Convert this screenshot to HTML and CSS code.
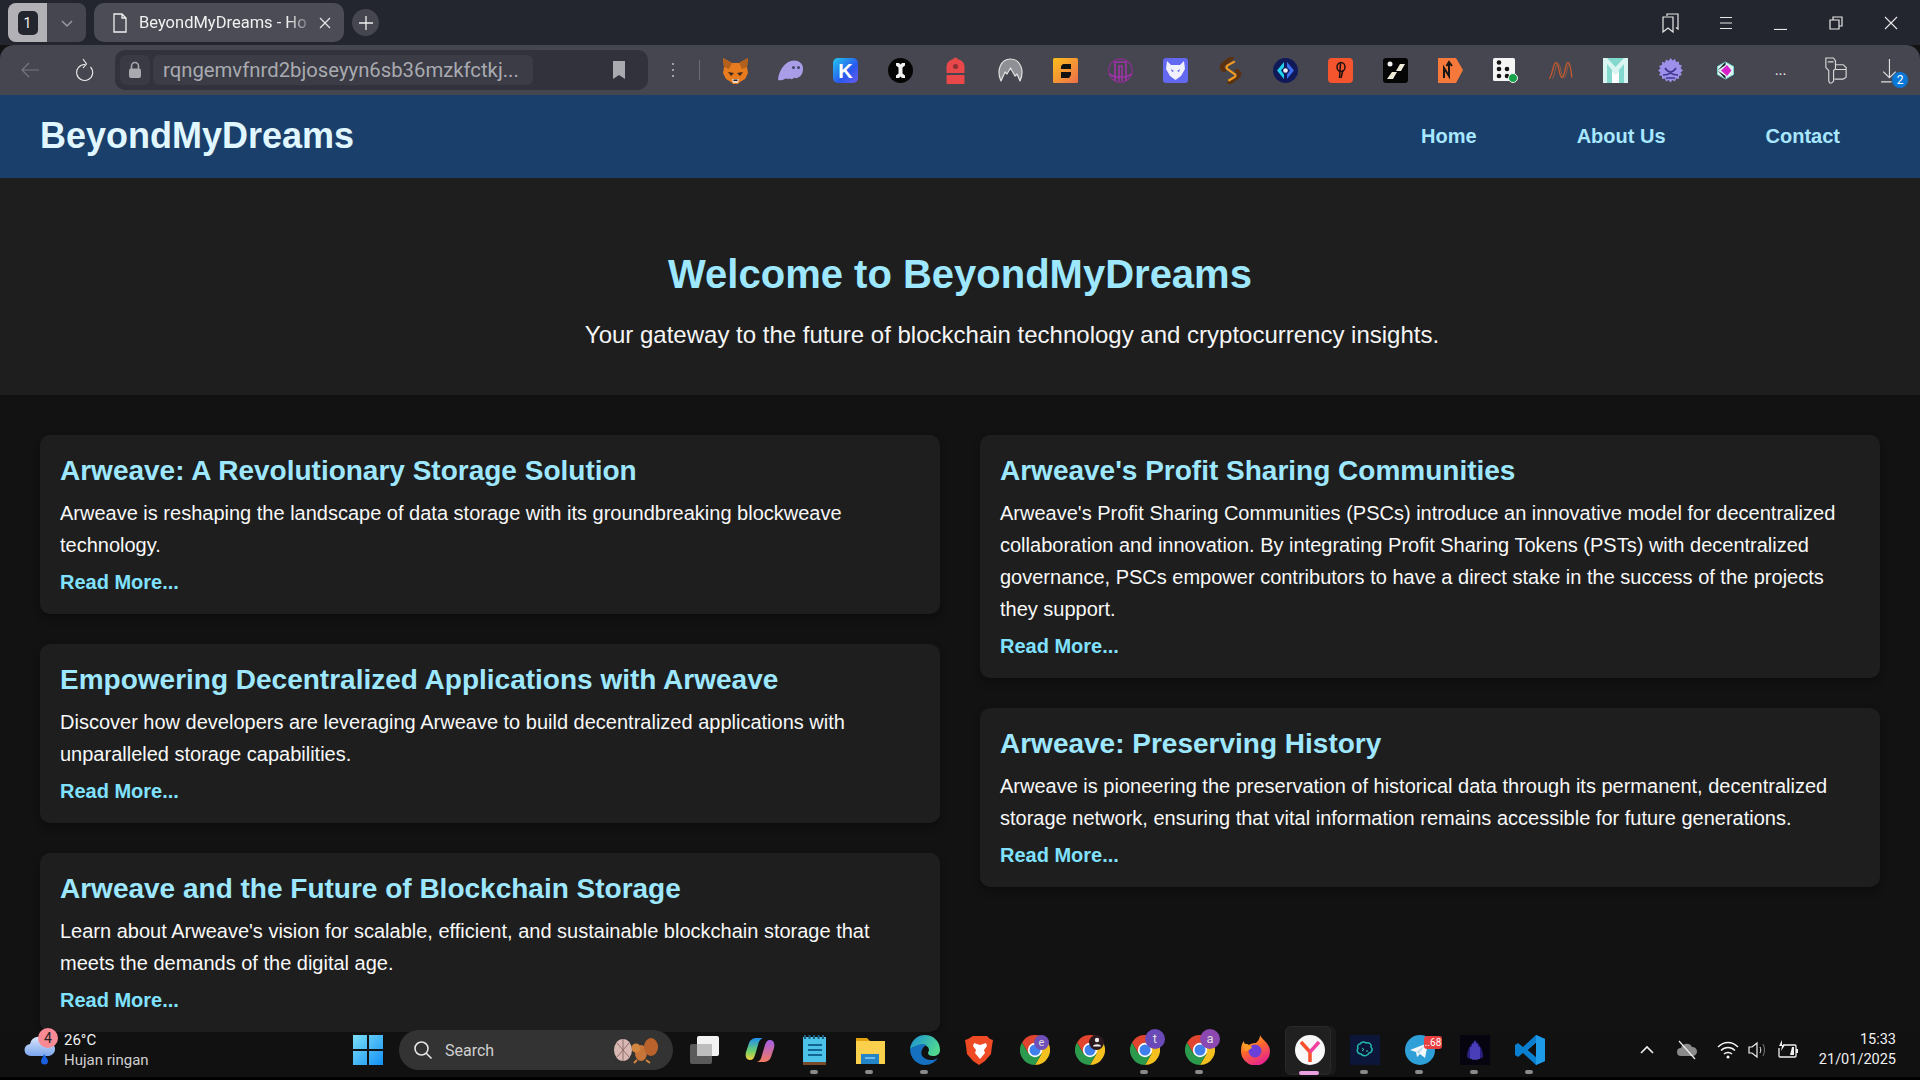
FILE: index.html
```html
<!DOCTYPE html>
<html lang="en">
<head>
    <meta charset="UTF-8">
    <meta name="viewport" content="width=device-width, initial-scale=1.0">
    <title>BeyondMyDreams - Home</title>
    <link rel="stylesheet" href="styles.css">
</head>
<body>
    <!-- shared icons -->
    <svg class="defs">
        <symbol id="chrome" viewBox="0 0 30 30">
            <path d="M15 7.500H28A15 15 0 0 0 2 7.500L8.500 18.750z" fill="#e2452f"/>
            <path d="M28 7.500A15 15 0 0 1 15 30L21.500 18.750 15 7.500z" fill="#f4c020"/>
            <path d="M15 30A15 15 0 0 1 2 7.500L8.500 18.750H21.500z" fill="#2c9a4c"/>
            <circle cx="15" cy="15" r="7.200" fill="#fff"/>
            <circle cx="15" cy="15" r="5.500" fill="#3f80ec"/>
        </symbol>
    </svg>

    <!-- browser tab strip -->
    <div class="tabstrip">
        <div class="workspace">
            <span class="ws-home"><span class="ws-num">1</span></span>
            <span class="ws-more">
                <svg width="14" height="14" viewBox="0 0 14 14"><path d="M2 5l5 5 5-5" fill="none" stroke="#9a9ba2" stroke-width="1.500"/></svg>
            </span>
        </div>
        <div class="tab">
            <svg width="16" height="20" viewBox="0 0 16 20"><path d="M2 1h8l4 4v14H2zM10 1v4h4" fill="none" stroke="#f0f0f0" stroke-width="1.300"/></svg>
            <span class="tab-title">BeyondMyDreams - Ho</span>
            <svg width="14" height="14" viewBox="0 0 14 14"><path d="M2 2l10 10M12 2L2 12" stroke="#e8e8e8" stroke-width="1.200"/></svg>
        </div>
        <span class="new-tab">
            <svg width="14" height="14" viewBox="0 0 14 14"><path d="M7 0v14M0 7h14" stroke="#f0f0f0" stroke-width="1.300"/></svg>
        </span>
        <div class="window-btns">
            <svg width="18" height="22" viewBox="0 0 18 22"><path d="M5 4V2h11v15l-2-1.500M1 5h10v15l-5-4-5 4z" fill="none" stroke="#e8e8e8" stroke-width="1.200"/></svg>
            <svg width="14" height="14" viewBox="0 0 14 14"><path d="M1 1.500h12M1 7h12M1 12.500h12" stroke="#e8e8e8" stroke-width="1.100"/></svg>
            <svg width="14" height="14" viewBox="0 0 14 14"><path d="M0 13.500h13" stroke="#e8e8e8" stroke-width="1.200"/></svg>
            <svg width="14" height="14" viewBox="0 0 14 14"><path d="M1 4h9v9H1zM4 4V1h9v9h-3" fill="none" stroke="#e8e8e8" stroke-width="1.200"/></svg>
            <svg width="14" height="14" viewBox="0 0 14 14"><path d="M1 1l12 12M13 1L1 13" stroke="#e8e8e8" stroke-width="1.100"/></svg>
        </div>
    </div>

    <!-- browser toolbar -->
    <div class="toolbar">
        <span class="nav-btn">
            <svg width="20" height="18" viewBox="0 0 20 18"><path d="M19 9H2M9 2L2 9l7 7" fill="none" stroke="#77787f" stroke-width="1.200"/></svg>
        </span>
        <span class="nav-btn">
            <svg width="20" height="24" viewBox="0 0 20 24"><path d="M15.500 9a8 8 0 1 1-5.500-2.500M8 1l3.500 5L8 10" fill="none" stroke="#f0f0f0" stroke-width="1.100"/></svg>
        </span>
        <div class="addressbar">
            <span class="lock">
                <svg width="14" height="18" viewBox="0 0 14 18"><path d="M3.500 8V5a3.500 3.500 0 0 1 7 0v3" fill="none" stroke="#a9aab0" stroke-width="1.600"/><rect x="1" y="7.500" width="12" height="9.500" rx="2" fill="#a9aab0"/></svg>
            </span>
            <span class="url">rqngemvfnrd2bjoseyyn6sb36mzkfctkj...</span>
            <svg class="bookmark" width="14" height="18" viewBox="0 0 14 18"><path d="M1 0h12v18l-6-4-6 4z" fill="#a9aab0"/></svg>
        </div>
        <span class="kebab"><i></i><i></i><i></i></span>
        <span class="toolbar-sep"></span>
        <div class="extensions">
            <span class="ext"><svg viewBox="0 0 25 25"><path d="M0 0l9 5h7l9-5-1 9 1 6-3 6-5 3-2 2h-5l-2-2-5-3-3-6 1-6z" fill="#e87b1e"/><path d="M0 0l9 5-3 6-5-2zM25 0l-9 5 3 6 5-2z" fill="#b3601c"/><path d="M5 14l6 1-3 3zM20 14l-6 1 3 3z" fill="#3a2a1c"/><path d="M9 21h7l-1 4h-5z" fill="#e4d8cc"/><path d="M10.500 21.500h4v1.500h-4z" fill="#222"/></svg></span>
            <span class="ext"><svg viewBox="0 0 25 20"><path d="M0 19C1 10 7 0 16 0c6 0 9 4 9 8 0 5-2 8-5 9-1 1-3 1-4 0-1 2-3 2-4 1-2 1-3 0-4 0-2 1-7 3-8 1z" fill="#a99de8"/><circle cx="15.500" cy="7" r="1.500" fill="#44446a"/><circle cx="20.500" cy="7" r="1.500" fill="#44446a"/></svg></span>
            <span class="ext"><svg viewBox="0 0 25 25"><defs><linearGradient id="kgrad" x1="0" y1="0" x2="1" y2="1"><stop offset="0" stop-color="#22c8f0"/><stop offset="0.600" stop-color="#2a58ee"/><stop offset="1" stop-color="#6a5cf0"/></linearGradient></defs><rect width="25" height="25" rx="5" fill="url(#kgrad)"/><text x="12.500" y="20" class="ext-letter">K</text></svg></span>
            <span class="ext"><svg viewBox="0 0 25 25"><circle cx="12.500" cy="12.500" r="12.500" fill="#050505"/><path d="M8 5h3l1.500 1.500L14 5h3v2.500l-2.500 2v6l2.500 2V20h-3l-1.500-1.500L11 20H8v-2.500l2.500-2v-6L8 7.500z" fill="#f2f2f2"/></svg></span>
            <span class="ext"><svg viewBox="0 0 18 27"><path d="M6 2.500C7 0 11 0 12 2.500z" fill="#e8484a"/><path d="M0 9a9 7 0 0 1 18 0v7H0z" fill="#e8484a"/><circle cx="9" cy="9.500" r="2.500" fill="#8a3036"/><rect y="18" width="18" height="9" rx="1" fill="#e8484a"/></svg></span>
            <span class="ext"><svg viewBox="0 0 25 25"><path d="M3 23C-2 12 3 1 12.500 1S27 12 22 23l-3-7-2 2-4.500-8L9 16l-2-2z" fill="#8f9095" stroke="#e2e2e2" stroke-width="1.200" stroke-linejoin="round"/></svg></span>
            <span class="ext"><svg viewBox="0 0 25 25"><defs><linearGradient id="ograd" x1="0" y1="0" x2="1" y2="1"><stop offset="0" stop-color="#fbbf1c"/><stop offset="1" stop-color="#ee6e4a"/></linearGradient></defs><rect width="25" height="25" rx="1.500" fill="url(#ograd)"/><path d="M10 6h8v5H8V8zM8 14h10v3l-2 3H8z" fill="#111"/></svg></span>
            <span class="ext"><svg viewBox="0 0 25 25"><circle cx="12.500" cy="12.500" r="11.700" fill="none" stroke="#8b2f92" stroke-width="1.200"/><path d="M7 23V4h11v19M11 23V8h3v15M1 16l6 3h11l6-3" fill="none" stroke="#a033a8" stroke-width="1.600"/></svg></span>
            <span class="ext"><svg viewBox="0 0 25 25"><rect width="25" height="25" rx="3" fill="#6368f0"/><path d="M4 3l4 4h9l4-4 1 8-4 7-5.500 4L7 18l-4-7z" fill="#f0f0ff"/><path d="M8 11l3 2-2 1zM17 11l-3 2 2 1z" fill="#6368f0"/></svg></span>
            <span class="ext"><svg viewBox="0 0 20 25"><path d="M11 1L3 7c-2 2-1 4 1 5M9 24l8-6c2-2 1-4-1-5" fill="none" stroke="#5a3212" stroke-width="4" stroke-linecap="round"/><path d="M14 4L7 8c-1 1-1 2 0 3l7 5c1 1 1 2-1 3l-5 3" fill="none" stroke="#f59a1c" stroke-width="2"/></svg></span>
            <span class="ext"><svg viewBox="0 0 25 25"><circle cx="12.500" cy="12.500" r="12.500" fill="#101a58"/><path d="M11 4l-7 8.500L11 21v-4.500L8 12.500 11 9z" fill="#22d3ee"/><path d="M14 4l7 8.500-7 8.500v-4.500l3-4-3-3.500z" fill="#3b6ff0"/><circle cx="12.500" cy="12.500" r="2.300" fill="#f4f4f4"/></svg></span>
            <span class="ext"><svg viewBox="0 0 25 25"><rect width="25" height="25" rx="4" fill="#f4552e"/><ellipse cx="13" cy="9" rx="4" ry="4.500" fill="none" stroke="#201010" stroke-width="1.500"/><path d="M12.500 5l-1 15M15 12l-2 8" stroke="#201010" stroke-width="1.500"/></svg></span>
            <span class="ext"><svg viewBox="0 0 25 25"><rect width="25" height="25" rx="3" fill="#050505"/><circle cx="7" cy="6" r="2.500" fill="#f4f4f4"/><path d="M17 6h5l-4 7h-5zM9 14h5l-4 7H4z" fill="#f0ead8"/></svg></span>
            <span class="ext"><svg viewBox="0 0 25 25"><path d="M0 0h18l7 12-7 13H0z" fill="#f4793b"/><path d="M6 20V10l5 8V6M8.500 8L11 4l3 4" fill="none" stroke="#161616" stroke-width="2"/></svg></span>
            <span class="ext"><svg viewBox="0 0 25 25"><rect width="22" height="23" rx="1.500" fill="#f5f5f5"/><circle cx="6" cy="4.500" r="2.300" fill="#151515"/><circle cx="6" cy="11" r="2.300" fill="#151515"/><circle cx="14" cy="11" r="2.300" fill="#151515"/><circle cx="6" cy="18" r="2.300" fill="#151515"/><circle cx="14" cy="18" r="2.300" fill="#151515"/><circle cx="20" cy="20" r="4.500" fill="#16a34a" stroke="#f5f5f5"/></svg></span>
            <span class="ext"><svg viewBox="0 0 25 18"><path d="M1 17C4 17 5 1 8 1s3 15 6 15 3-15 6-15 3 12 4 15" fill="none" stroke="#c4592e" stroke-width="1.300"/><path d="M4 17C7 17 7 2 10 2s3 14 6 14 3-13 5-13" fill="none" stroke="#8e5a44" stroke-width="1.100"/></svg></span>
            <span class="ext"><svg viewBox="0 0 25 25"><rect width="25" height="25" fill="#84d9cf"/><path d="M0 0h4l8.500 9L21 0h4v25h-4V6l-5 6v13H9V12L4 6v19H0z" fill="#fff" opacity="0.700"/><path d="M9 25V14l3.500 3 3.500-3v11z" fill="#fff"/></svg></span>
            <span class="ext"><svg viewBox="0 0 25 25"><path d="M12.500 0l2 2.500 2.500-1.500 1 3 3-.5v3l3 1-1.500 2.500L25 12.500l-2.500 2 1.500 2.500-3 1v3l-3-.5-1 3-2.500-1.500-2 2.500-2-2.500L8 23.500l-1-3-3 .5v-3l-3-1 1.500-2.500L0 12.500l2.500-2L1 8l3-1V4l3 .5 1-3 2.500 1.500z" fill="#9d90ea"/><path d="M7 10c2 3 3 4 5.500 4S16 13 18 10M5 17c3 0 5 0 7.500-2 2.500 2 4.500 2 7.500 2M8 20h9" fill="none" stroke="#3f3690" stroke-width="1.600"/></svg></span>
            <span class="ext"><svg viewBox="0 0 25 25"><path d="M12.500 4l8 4.500v8l-8 4.500-8-4.500v-8z" fill="#dff6f4" stroke="#7ad7d2"/><path d="M4.500 12.500L12.500 4v3z" fill="#101820"/><path d="M4.500 12.500l8 8.500v-3z" fill="#101820"/><path d="M14 7l4.500 5.500L14 18l-6-5.500z" fill="#d820c8"/></svg></span>
            <span class="ext ext-text">...</span>
            <span class="ext"><svg viewBox="0 0 24 28"><path d="M2 1h8l2 3v8l-2 2v11l-2 2H6l-1-2V14L2 11zM4 5h6M12 8h8l3 3v10l-3 2h-9M12 13h11" fill="none" stroke="#d8d8d8" stroke-width="1.200"/></svg></span>
            <span class="ext"><svg viewBox="0 0 24 26"><path d="M11 2v18M5 14l6 6 6-6M3 24h10" fill="none" stroke="#e0e0e0" stroke-width="1.100"/></svg><span class="dl-badge">2</span></span>
        </div>
    </div>

    <!-- the page itself -->
    <div class="viewport">
        <header class="navbar">
            <div class="logo">BeyondMyDreams</div>
            <nav class="nav-links">
                <a href="#">Home</a>
                <a href="#">About Us</a>
                <a href="#">Contact</a>
            </nav>
        </header>

        <section class="hero">
            <h1>Welcome to BeyondMyDreams</h1>
            <p>Your gateway to the future of blockchain technology and cryptocurrency insights.</p>
        </section>

        <main class="posts">
            <div class="post-col">
                <article class="post">
                    <h2>Arweave: A Revolutionary Storage Solution</h2>
                    <p>Arweave is reshaping the landscape of data storage with its groundbreaking blockweave technology.</p>
                    <a href="#">Read More...</a>
                </article>
                <article class="post">
                    <h2>Empowering Decentralized Applications with Arweave</h2>
                    <p>Discover how developers are leveraging Arweave to build decentralized applications with unparalleled storage capabilities.</p>
                    <a href="#">Read More...</a>
                </article>
                <article class="post">
                    <h2>Arweave and the Future of Blockchain Storage</h2>
                    <p>Learn about Arweave's vision for scalable, efficient, and sustainable blockchain storage that meets the demands of the digital age.</p>
                    <a href="#">Read More...</a>
                </article>
            </div>
            <div class="post-col">
                <article class="post">
                    <h2>Arweave's Profit Sharing Communities</h2>
                    <p>Arweave's Profit Sharing Communities (PSCs) introduce an innovative model for decentralized collaboration and innovation. By integrating Profit Sharing Tokens (PSTs) with decentralized governance, PSCs empower contributors to have a direct stake in the success of the projects they support.</p>
                    <a href="#">Read More...</a>
                </article>
                <article class="post">
                    <h2>Arweave: Preserving History</h2>
                    <p>Arweave is pioneering the preservation of historical data through its permanent, decentralized storage network, ensuring that vital information remains accessible for future generations.</p>
                    <a href="#">Read More...</a>
                </article>
            </div>
        </main>
    </div>

    <!-- windows taskbar -->
    <footer class="taskbar">
        <div class="weather">
            <span class="weather-icon">
                <svg width="32" height="32" viewBox="0 0 32 32"><defs><linearGradient id="cloud" x1="0" y1="0" x2="0" y2="1"><stop offset="0" stop-color="#d8e6fb"/><stop offset="1" stop-color="#7ba6ee"/></linearGradient></defs><path d="M7 22a6 6 0 0 1-1-12 9 9 0 0 1 17-2 7 7 0 0 1 2 14z" fill="url(#cloud)"/><path d="M20 20c2 3 4 5 4 7a3.500 3.500 0 0 1-7 0c0-2 2-4 3-7z" fill="#1a5fe0"/></svg>
                <span class="weather-badge">4</span>
            </span>
            <div class="weather-text">
                <span>26°C</span>
                <span class="weather-desc">Hujan ringan</span>
            </div>
        </div>
        <span class="start">
            <svg width="30" height="30" viewBox="0 0 30 30"><defs><linearGradient id="win" x1="0" y1="0" x2="1" y2="1"><stop offset="0" stop-color="#7ce0f8"/><stop offset="1" stop-color="#1390f5"/></linearGradient></defs><path d="M0 0h14v14H0zM16 0h14v14H16zM0 16h14v14H0zM16 16h14v14H16z" fill="url(#win)"/></svg>
        </span>
        <div class="searchbox">
            <svg width="20" height="20" viewBox="0 0 20 20"><circle cx="8.500" cy="8.500" r="6.500" fill="none" stroke="#e6e6e6" stroke-width="1.600"/><path d="M13 13l5.500 5.500" stroke="#e6e6e6" stroke-width="1.600"/></svg>
            <span class="search-label">Search</span>
            <svg class="search-art" width="50" height="30" viewBox="0 0 50 30"><ellipse cx="10" cy="15" rx="9" ry="11" fill="#d9b8b4"/><path d="M4 8l12 14M10 4v22M16 8L4 22" stroke="#8e6f6c"/><ellipse cx="28" cy="18" rx="6" ry="8" fill="#c8753a"/><circle cx="23" cy="13" r="4.500" fill="#d4853f"/><ellipse cx="38" cy="12" rx="7" ry="9" fill="#b9622c"/><path d="M24 25l-3 3M33 25l4 3" stroke="#d4853f" stroke-width="2"/></svg>
        </div>
        <div class="apps">
            <span class="app"><svg viewBox="0 0 30 30"><rect x="7" y="1" width="22" height="20" rx="2" fill="#f2f2f2"/><rect x="0" y="9" width="22" height="20" rx="2" fill="#5a5a5a"/><rect x="7" y="9" width="15" height="12" fill="#bdbdbd"/></svg></span>
            <span class="app"><svg viewBox="0 0 30 30"><defs><linearGradient id="cop1" x1="0" y1="0" x2="0" y2="1"><stop offset="0" stop-color="#1c8ef0"/><stop offset="0.600" stop-color="#6fd06a"/><stop offset="1" stop-color="#f4d03c"/></linearGradient><linearGradient id="cop2" x1="0" y1="0" x2="0" y2="1"><stop offset="0" stop-color="#a45ee6"/><stop offset="1" stop-color="#f27a5e"/></linearGradient></defs><path d="M12 3h6c-3 1-4 3-5 7l-3 10c-1 3-2 5-5 5-4 0-5-4-4-8l3-9c1-3 4-5 8-5z" fill="url(#cop1)"/><path d="M18 27h-6c3-1 4-3 5-7l3-10c1-3 2-5 5-5 4 0 5 4 4 8l-3 9c-1 3-4 5-8 5z" fill="url(#cop2)"/></svg></span>
            <span class="app app-on"><svg viewBox="0 0 24 30"><rect y="2" width="23" height="27" fill="#4cc2e8"/><rect y="27" width="23" height="3" fill="#7a4a2a"/><path d="M2 0v4M6.500 0v4M11 0v4M15.500 0v4M20 0v4" stroke="#1a5f80" stroke-width="2"/><path d="M5 10h14M5 15h14M5 20h14" stroke="#106690" stroke-width="2"/></svg></span>
            <span class="app app-on"><svg viewBox="0 0 30 30"><path d="M1 3h11l3 3h-14z" fill="#e0a10c"/><rect x="1" y="6" width="29" height="23" fill="#fbd04c"/><path d="M6 19h18v10H6z" fill="#2384c8"/><path d="M10 23h10" stroke="#8ad0f0" stroke-width="1.500"/></svg></span>
            <span class="app app-on"><svg viewBox="0 0 30 30"><defs><linearGradient id="edge" x1="0" y1="0" x2="1" y2="0.500"><stop offset="0" stop-color="#1a8fd8"/><stop offset="1" stop-color="#50d890"/></linearGradient></defs><path d="M0 14C1 6 7 0 15 0c8 0 15 6 15 15 0 4-3 6-7 6-3 0-5-1-5-3 0-1 1-2 1-3 0-3-3-5-6-5-7 0-13 4-13 4z" fill="url(#edge)"/><path d="M0 14c0 9 7 16 15 16 6 0 10-3 13-7-3 2-8 3-12 1-5-2-6-7-3-11 1-2 3-3 4-3-4-2-9-1-13 2-2 1-4 1-4 2z" fill="#1570c0"/></svg></span>
            <span class="app"><svg viewBox="0 0 26 30"><path d="M6 1h14l3 3 3 1-1 6-1 8-6 7-6 4-6-4-6-7-1-8-1-6 3-1z" fill="#ee4a24"/><path d="M7 8l6 2 6-2 1 3-3 4 1 3-5 6-5-6 1-3-3-4z" fill="#fff"/></svg></span>
            <span class="app"><svg viewBox="0 0 30 30"><use href="#chrome"/></svg><span class="app-badge badge-purple">e</span></span>
            <span class="app"><svg viewBox="0 0 30 30"><use href="#chrome"/></svg><span class="app-badge badge-dark"><svg width="10" height="10" viewBox="0 0 10 10"><circle cx="5" cy="3" r="2.200" fill="#eee"/><path d="M1 9.500c0-3 8-3 8 0z" fill="#eee"/></svg></span></span>
            <span class="app app-on"><svg viewBox="0 0 30 30"><use href="#chrome"/></svg><span class="app-badge badge-large badge-violet">t</span></span>
            <span class="app app-on"><svg viewBox="0 0 30 30"><use href="#chrome"/></svg><span class="app-badge badge-large badge-plum">a</span></span>
            <span class="app"><svg viewBox="0 0 30 30"><defs><linearGradient id="ff" x1="0" y1="0" x2="0.500" y2="1"><stop offset="0" stop-color="#ffd23c"/><stop offset="0.500" stop-color="#ff6a28"/><stop offset="1" stop-color="#e8278a"/></linearGradient></defs><path d="M20 0c1 4 10 8 10 16a14.500 14.500 0 0 1-29 0C1 11 2 8 4 6c0 3 1 4 4 5 3-3 6-3 8-3 3-3 4-5 4-8z" fill="url(#ff)"/><circle cx="15" cy="16" r="6.500" fill="#6a40d8"/><path d="M2 9c5-1 9 1 10 4-2 1-5 4-7 3z" fill="#ff9a28"/></svg></span>
            <span class="app app-current"><svg viewBox="0 0 30 30"><circle cx="15" cy="15" r="15" fill="#f8f8f8"/><path d="M15 17L6 7M15 17v10" fill="none" stroke="#f9502c" stroke-width="3.500"/><path d="M15 17l9-10" fill="none" stroke="#f040a0" stroke-width="3.500"/></svg></span>
            <span class="app app-on"><svg viewBox="0 0 30 30"><rect width="30" height="30" fill="#0c1638"/><path d="M10 9c2-3 5-2 6-1 3-1 6 1 5 4 2 2 1 6-2 6-1 3-6 4-8 1-3 0-5-3-3-6-1-2 0-4 2-4z" fill="none" stroke="#22b8b0" stroke-width="1.500"/><path d="M12 13l2 1.500-2 1.500M16 16h2" fill="none" stroke="#30d0a8"/></svg></span>
            <span class="app app-on"><svg viewBox="0 0 30 30"><circle cx="15" cy="15" r="15" fill="#2f9fd8"/><path d="M5 15L23 8l-3 15-5-4-3 3-1-5z" fill="#f4f9fc"/><path d="M11 17l9-7-6 9z" fill="#c2dcec"/></svg><span class="app-count">..68</span></span>
            <span class="app app-on"><svg viewBox="0 0 30 30"><rect width="30" height="30" fill="#05040f"/><path d="M15 5c5 5 8 10 8 17-3 3-13 3-16 0 0-7 3-12 8-17z" fill="#2a2080"/><path d="M11 12v12M13 9v16M15 7v18M17 9v16M19 12v12" stroke="#6a5cf0"/></svg></span>
            <span class="app app-on"><svg viewBox="0 0 30 30"><path d="M21 0l9 4v22l-9 4L8 18l-5 4-3-2V10l3-2 5 4zM21 8l-8 7 8 7z" fill="#0a7fd0"/><path d="M21 0l9 4v22l-9 4z" fill="#1e9be8"/><path d="M21 8l-8 7 8 7z" fill="#111"/></svg></span>
        </div>
        <div class="tray">
            <svg width="14" height="10" viewBox="0 0 14 10"><path d="M1 8l6-6 6 6" fill="none" stroke="#f0f0f0" stroke-width="1.600"/></svg>
            <svg class="tray-cloud" width="22" height="20" viewBox="0 0 22 20"><path d="M5 16a4 4 0 0 1 0-8 6 6 0 0 1 11-1 4.500 4.500 0 0 1 1 9z" fill="#8a8a8a"/><path d="M3 1l16 18" stroke="#f0f0f0" stroke-width="1.200"/></svg>
            <svg width="22" height="18" viewBox="0 0 22 18"><path d="M1 6c6-6 14-6 20 0M4 9.500c4-4 10-4 14 0M7 13c2-2 6-2 8 0" fill="none" stroke="#f4f4f4" stroke-width="1.400"/><circle cx="11" cy="16" r="1.500" fill="#f4f4f4"/></svg>
            <svg class="tray-tight" width="20" height="18" viewBox="0 0 20 18"><path d="M1 6h3l5-4v14l-5-4H1z" fill="none" stroke="#f0f0f0" stroke-width="1.200"/><path d="M12 6c1 2 1 4 0 6" fill="none" stroke="#f0f0f0"/><path d="M15 3c2 4 2 8 0 12" fill="none" stroke="#777"/></svg>
            <svg class="tray-tight" width="22" height="20" viewBox="0 0 22 20"><path d="M6 5h12a1 1 0 0 1 1 1v10a1 1 0 0 1-1 1H3a1 1 0 0 1-1-1V8" fill="none" stroke="#f0f0f0" stroke-width="1.300"/><path d="M5 15h8l2-8h2v8h-3z" fill="#f0f0f0"/><path d="M5 0L2 6h3l-1 5 4-6H5z" fill="#f0f0f0"/><path d="M19 9h2v4h-2z" fill="#f0f0f0"/></svg>
        </div>
        <div class="clock">
            <span>15:33</span>
            <span>21/01/2025</span>
        </div>
    </footer>
</body>
</html>
```

FILE: styles.css
```css
* {
    box-sizing: border-box;
}
html, body {
    margin: 0;
    padding: 0;
    height: 1080px;
    overflow: hidden;
}
body {
    display: flex;
    flex-direction: column;
    font-family: "Liberation Sans", Arial, sans-serif;
    background: #121212;
    color: #e0e0e0;
}
.defs {
    position: absolute;
    width: 0;
    height: 0;
}

/* tab strip */
.tabstrip {
    flex: none;
    height: 45px;
    display: flex;
    align-items: center;
    padding: 0 0 0 8px;
    background: #24262f;
    font-family: Roboto, sans-serif;
    color: #f0f0f0;
}
.workspace {
    display: flex;
    width: 78px;
    height: 39px;
    border-radius: 8px;
    overflow: hidden;
    background: #45464f;
}
.ws-home {
    width: 39px;
    display: flex;
    align-items: center;
    justify-content: center;
    background: #b2b2b6;
}
.ws-num {
    width: 20px;
    height: 24px;
    display: flex;
    align-items: center;
    justify-content: center;
    background: #24262f;
    border-radius: 5px;
    font-size: 14px;
}
.ws-more {
    flex: 1;
    display: flex;
    align-items: center;
    justify-content: center;
}
.tab {
    width: 250px;
    height: 39px;
    margin-left: 8px;
    padding: 0 12px 0 18px;
    display: flex;
    align-items: center;
    gap: 11px;
    border-radius: 10px;
    background: #4b4c55;
}
.tab-title {
    flex: 1;
    overflow: hidden;
    white-space: nowrap;
    font-size: 16.500px;
    -webkit-mask-image: linear-gradient(to right, #000 88%, rgba(0, 0, 0, 0.3));
    mask-image: linear-gradient(to right, #000 88%, rgba(0, 0, 0, 0.3));
}
.new-tab {
    width: 27px;
    height: 27px;
    margin-left: 8px;
    display: flex;
    align-items: center;
    justify-content: center;
    border-radius: 50%;
    background: #45464f;
}
.window-btns {
    margin-left: auto;
    margin-right: 2px;
    display: grid;
    grid-template-columns: repeat(5, 55px);
    justify-items: center;
    align-items: center;
}

/* toolbar */
.toolbar {
    flex: none;
    height: 50px;
    display: flex;
    align-items: center;
    background: #45464f;
    border-radius: 14px 14px 0 0;
    padding-left: 2px;
}
.nav-btn {
    width: 55px;
    display: flex;
    justify-content: center;
}
.addressbar {
    width: 533px;
    height: 40px;
    margin-left: 3px;
    padding: 0 5px;
    display: flex;
    align-items: center;
    gap: 3px;
    border-radius: 10px;
    background: #31323b;
}
.lock {
    width: 30px;
    height: 30px;
    display: flex;
    align-items: center;
    justify-content: center;
    background: #393a43;
    border-radius: 6px;
}
.url {
    width: 380px;
    height: 30px;
    line-height: 31px;
    padding-left: 10px;
    border-radius: 6px;
    background: #3b3c45;
    color: #a9aab0;
    font-family: Roboto, sans-serif;
    font-size: 20.300px;
    white-space: nowrap;
    overflow: hidden;
}
.bookmark {
    margin-left: 76px;
}
.kebab {
    width: 4px;
    margin-left: 24px;
    display: flex;
    flex-direction: column;
    gap: 4px;
}
.kebab i {
    width: 2px;
    height: 2px;
    background: #a0a1a7;
}
.toolbar-sep {
    width: 1px;
    height: 20px;
    margin-left: 23px;
    background: #6a6b73;
}
.extensions {
    margin-left: 8px;
    display: flex;
    align-items: center;
}
.ext {
    position: relative;
    width: 55px;
    height: 30px;
    display: flex;
    align-items: center;
    justify-content: center;
}
.ext > svg {
    width: 25px;
    height: 27px;
}
.ext-letter {
    fill: #fff;
    font-family: "Liberation Sans", sans-serif;
    font-weight: 700;
    font-size: 20px;
    text-anchor: middle;
}
.ext-text {
    font-size: 14px;
    color: #f0f0f0;
}
.dl-badge {
    position: absolute;
    right: 10px;
    bottom: -3px;
    width: 16px;
    height: 16px;
    border-radius: 50%;
    background: #0a78d8;
    color: #fff;
    font-family: Roboto, sans-serif;
    font-size: 12px;
    line-height: 16px;
    text-align: center;
}

/* page */
.viewport {
    flex: 1;
    min-height: 0;
    overflow: hidden;
}
.navbar {
    height: 83px;
    padding: 0 40px;
    display: flex;
    align-items: center;
    justify-content: space-between;
    background: #1a3f6b;
}
.logo {
    margin-bottom: 2px;
    font-size: 36px;
    font-weight: 700;
    color: #e0f7ff;
}
.nav-links {
    display: flex;
    gap: 100px;
    padding-right: 40px;
}
.nav-links a {
    font-size: 20px;
    font-weight: 700;
    color: #a8e8ff;
    text-decoration: none;
}
.hero {
    height: 217px;
    padding-top: 73px;
    text-align: center;
    background: #1e1e1e;
}
.hero h1 {
    margin: 0 0 22px;
    font-size: 40px;
    line-height: 46px;
    color: #9ee8ff;
}
.hero p {
    margin: 0;
    padding-left: 104px;
    font-size: 24px;
    line-height: 32px;
    color: #f5f5f5;
}
.posts {
    display: grid;
    grid-template-columns: 1fr 1fr;
    gap: 40px;
    padding: 40px;
    align-items: start;
}
.post-col {
    display: flex;
    flex-direction: column;
    gap: 30px;
}
.post {
    padding: 20px 20px 16px;
    border-radius: 10px;
    background: #1e1e1e;
    box-shadow: 0 4px 8px rgba(0, 0, 0, 0.3);
}
.post h2 {
    margin: 0 0 10px;
    font-size: 28px;
    line-height: 32px;
    color: #9ee8ff;
}
.post p {
    margin: 0 0 5px;
    font-size: 20px;
    line-height: 32px;
    color: #f8f8f8;
}
.post a {
    font-size: 20px;
    line-height: 32px;
    font-weight: 700;
    color: #80e2ff;
    text-decoration: none;
}

/* taskbar */
.taskbar {
    flex: none;
    height: 48px;
    padding-bottom: 9px;
    display: flex;
    align-items: center;
    background: #111;
    border-bottom: 3px solid #000;
    font-family: Roboto, sans-serif;
    color: #f0f0f0;
}
.weather {
    width: 340px;
    padding-left: 24px;
    display: flex;
    align-items: center;
    gap: 7px;
}
.weather-icon {
    position: relative;
    width: 33px;
    height: 32px;
}
.weather-badge {
    position: absolute;
    top: -6px;
    right: -1px;
    width: 20px;
    height: 20px;
    border-radius: 50%;
    background: #f88a96;
    color: #222;
    font-size: 14px;
    line-height: 20px;
    text-align: center;
}
.weather-text {
    display: flex;
    flex-direction: column;
    font-size: 15px;
    line-height: 20px;
}
.weather-desc {
    color: #cfcfcf;
}
.start {
    width: 55px;
    display: flex;
    justify-content: center;
}
.searchbox {
    width: 274px;
    height: 40px;
    margin-left: 4px;
    padding: 0 10px 0 14px;
    display: flex;
    align-items: center;
    gap: 12px;
    border-radius: 20px;
    background: #333;
}
.search-label {
    flex: 1;
    font-size: 16px;
    color: #d0d0d0;
}
.apps {
    margin-left: 4px;
    display: flex;
}
.app {
    position: relative;
    width: 55px;
    height: 49px;
    display: flex;
    align-items: center;
    justify-content: center;
}
.app > svg {
    position: relative;
    width: 30px;
    height: 30px;
}
.app-on::after {
    content: "";
    position: absolute;
    left: 23px;
    bottom: 1px;
    width: 8px;
    height: 4px;
    border-radius: 2px;
    background: #8a8a8a;
}
.app-current::before {
    content: "";
    position: absolute;
    left: 3px;
    top: 0;
    bottom: 0;
    width: 44px;
    border-radius: 6px;
    background: #202020;
    border: 1px solid #2a2a2a;
    box-shadow: 5px 0 0 #1a1a1a;
}
.app-current::after {
    content: "";
    position: absolute;
    left: 17px;
    bottom: 0;
    width: 20px;
    height: 4px;
    border-radius: 2px;
    background: #e8a0e0;
}
.app-badge {
    position: absolute;
    top: 9px;
    right: 13px;
    width: 15px;
    height: 15px;
    display: flex;
    align-items: center;
    justify-content: center;
    border-radius: 50%;
    color: #ddd;
    font-size: 11px;
}
.badge-large {
    top: 3px;
    right: 7px;
    width: 20px;
    height: 20px;
    font-size: 13px;
}
.badge-purple {
    background: #6f50b8;
}
.badge-dark {
    background: #2a1a1e;
}
.badge-violet {
    background: #6a4ab8;
}
.badge-plum {
    background: #8a48b0;
}
.app-count {
    position: absolute;
    top: 10px;
    right: 5px;
    width: 18px;
    height: 13px;
    border-radius: 3px;
    background: #e84040;
    color: #fff;
    font-size: 10px;
    line-height: 13px;
    text-align: center;
}
.tray {
    margin-left: 83px;
    display: flex;
    align-items: center;
    gap: 20px;
}
.tray-cloud {
    margin-left: 2px;
    margin-right: -1px;
}
.tray-tight {
    margin-left: -11px;
}
.clock {
    margin-left: auto;
    padding-right: 24px;
    display: flex;
    flex-direction: column;
    align-items: flex-end;
    font-size: 14.500px;
    line-height: 20px;
}
```
